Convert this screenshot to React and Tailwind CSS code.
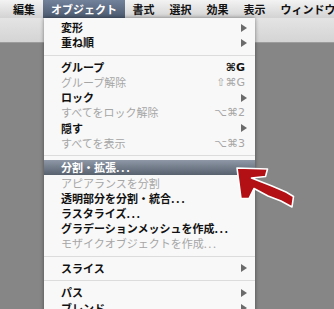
import React from 'react';

const rows = [
  { t: '変形', arrow: true },
  { t: '重ね順', arrow: true },
  'sep',
  { t: 'グループ', sc: '⌘G' },
  { t: 'グループ解除', sc: '⇧⌘G', dis: true },
  { t: 'ロック', arrow: true },
  { t: 'すべてをロック解除', sc: '⌥⌘2', dis: true },
  { t: '隠す', arrow: true },
  { t: 'すべてを表示', sc: '⌥⌘3', dis: true },
  'sep',
  { t: '分割・拡張', dots: true, hl: true },
  { t: 'アピアランスを分割', dis: true },
  { t: '透明部分を分割・統合', dots: true },
  { t: 'ラスタライズ', dots: true },
  { t: 'グラデーションメッシュを作成', dots: true },
  { t: 'モザイクオブジェクトを作成', dots: true, dis: true },
  'sep',
  { t: 'スライス', arrow: true },
  'sep',
  { t: 'パス', arrow: true },
  { t: 'ブレンド', arrow: true },
];

const font = { fontFamily: '"Noto Sans CJK JP", "DejaVu Sans", sans-serif' };

function Tri() {
  return (
    <svg width="6" height="8" viewBox="0 0 6 8" className="mr-[-1px] shrink-0">
      <path d="M0 0 L6 4 L0 8 Z" fill="#6b6b6b" />
    </svg>
  );
}

const barItem = 'shrink-0 whitespace-nowrap h-full flex items-center';

export default function App() {
  return (
    <div
      className="relative w-[334px] h-[309px] overflow-hidden bg-[#868686] text-[11px] leading-none"
      style={font}
    >
      {/* menu bar */}
      <div className="flex h-[18px] items-center pl-[6px] bg-linear-to-b from-[#f3f3f3] to-[#d3d3d3] font-bold text-[#111] overflow-hidden">
        <div className={barItem + ' px-[7px]'}>編集</div>
        <div className={barItem + ' ml-[1px] px-[8px] text-white bg-linear-to-b from-[#72829a] to-[#4c5a70]'}>
          オブジェクト
        </div>
        <div className={barItem + ' px-[7.5px]'}>書式</div>
        <div className={barItem + ' px-[7.5px]'}>選択</div>
        <div className={barItem + ' px-[7.5px]'}>効果</div>
        <div className={barItem + ' px-[7.5px]'}>表示</div>
        <div className={barItem + ' px-[7.5px]'}>ウィンドウ</div>
      </div>
      {/* toolbar */}
      <div className="h-[25px] bg-linear-to-b from-[#e4e4e4] to-[#d4d4d4] border-b border-[#9c9c9c]" />

      {/* dropdown menu */}
      <div className="absolute left-[44px] top-[18px] w-[211px] bg-[#f8f8f8] pt-[2px] shadow-[0_0_4px_rgba(0,0,0,0.45)]">
        {rows.map((r, i) =>
          r === 'sep' ? (
            <div key={i} className="h-[9.4px] flex items-center">
              <div className="h-px w-full bg-[#dcdcdc]" />
            </div>
          ) : (
            <div
              key={i}
              className={
                'h-[15.2px] flex items-center pl-[17px] pr-[9px] ' +
                (r.hl
                  ? 'bg-linear-to-b from-[#8e98a6] to-[#58626f] text-white font-bold'
                  : r.dis
                  ? 'text-[#a6a6a6]'
                  : 'text-[#111] font-bold')
              }
            >
              <span className="flex-1 whitespace-nowrap">
                {r.t}
                {r.dots && <span className="tracking-[1.5px]">...</span>}
              </span>
              {r.arrow && <Tri />}
              {r.sc && (
                <span
                  className={'mr-[1px] whitespace-nowrap ' + (r.dis ? 'text-[#a6a6a6]' : 'text-[#111] font-bold')}
                  style={{ fontFamily: '"DejaVu Sans", sans-serif' }}
                >
                  {r.sc}
                </span>
              )}
            </div>
          )
        )}
      </div>

      {/* red arrow */}
      <svg
        className="absolute left-0 top-0 pointer-events-none"
        width="334"
        height="309"
        viewBox="0 0 334 309"
      >
        <path
          d="M237 168 L267.5 169 L265.5 176.5 L251.5 178 L272 186 L286 192 L293.5 196.5 L292 207 L281 201 L268 196 L254 188.5 L249 198.5 L241 198.5 Z"
          fill="#b31015"
          stroke="#ffffff"
          strokeWidth="1.6"
          strokeLinejoin="round"
        />
      </svg>
    </div>
  );
}
